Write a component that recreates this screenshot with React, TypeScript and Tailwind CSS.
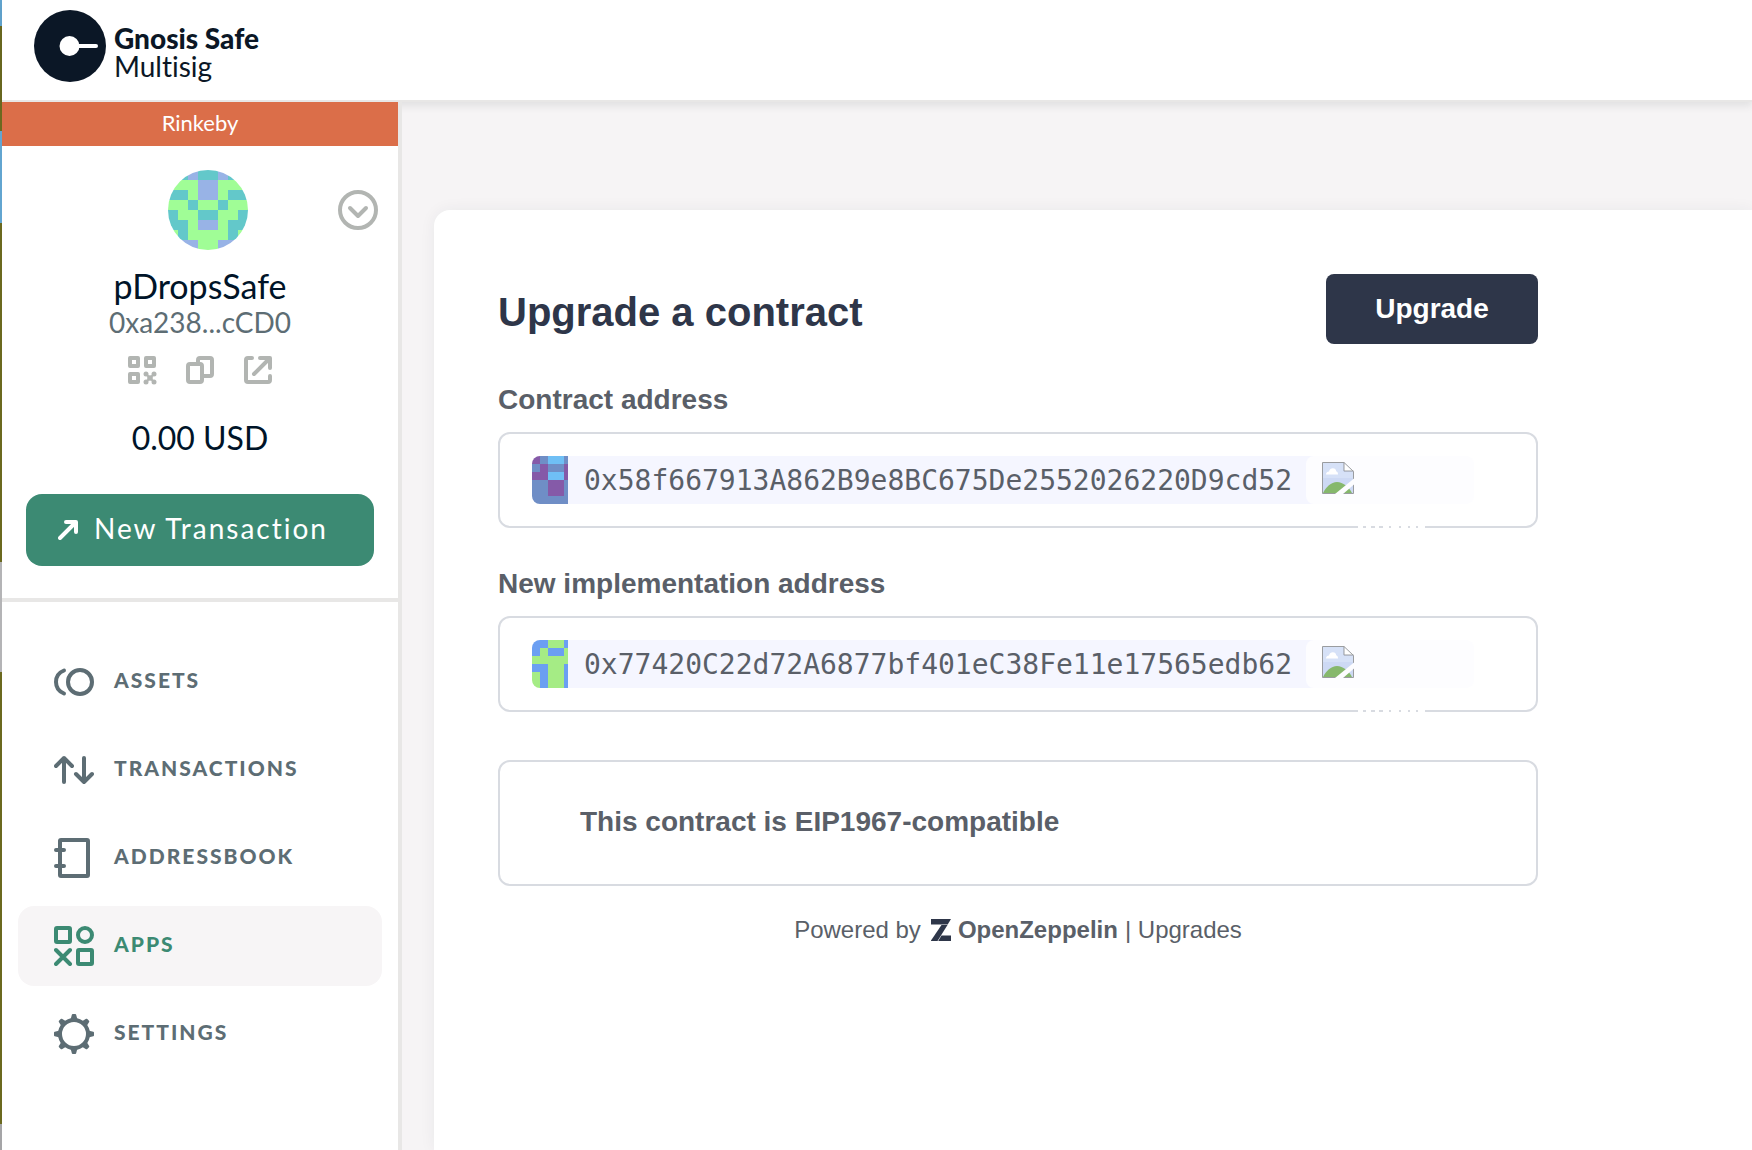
import type { ReactNode } from 'react';

type IconProps = { className?: string };

/* Pixel grid: one letter per cell, each letter looked up in a palette. */
function PixelGrid({ rows, palette, width, height, cell, className }: {
  rows: string[];
  palette: Record<string, string>;
  width: number;
  height: number;
  cell: number;
  className?: string;
}) {
  return (
    <svg width={width} height={height} viewBox={`0 0 ${width} ${height}`} shapeRendering="crispEdges" className={className} aria-hidden="true">
      {rows.flatMap((row, y) =>
        row.split('').map((c, x) => (
          <rect key={`${x}-${y}`} x={x * cell} y={y * cell} width={cell} height={cell} fill={palette[c]} />
        )),
      )}
    </svg>
  );
}

const SafeLogo = () => (
  <svg width="72" height="72" viewBox="0 0 72 72" aria-hidden="true" className="shrink-0">
    <circle cx="36" cy="36" r="36" fill="#0b1726" />
    <circle cx="35.500" cy="36" r="10" fill="#fff" />
    <path d="M36 36H62" stroke="#fff" strokeWidth="4" strokeLinecap="round" />
  </svg>
);

const ChevronCircle = () => (
  <svg width="40" height="40" viewBox="0 0 40 40" fill="none" stroke="#b2b5b2" strokeWidth="4" strokeLinecap="round" strokeLinejoin="round" aria-hidden="true">
    <circle cx="20" cy="20" r="18" />
    <path d="M12 18l8 8 8-8" />
  </svg>
);

const QrIcon = () => (
  <svg width="29" height="29" viewBox="0 0 29 29" fill="none" stroke="#b2b5b2" strokeWidth="4" strokeLinejoin="round" aria-hidden="true">
    <rect x="2" y="2" width="8" height="8" />
    <rect x="18" y="2" width="8" height="8" />
    <rect x="2" y="18" width="8" height="8" />
    <g fill="#b2b5b2" stroke="none">
      <circle cx="18" cy="18" r="2.5" />
      <circle cx="26" cy="18" r="2.5" />
      <circle cx="22" cy="22" r="2.8" />
      <circle cx="18" cy="26" r="2.5" />
      <circle cx="26" cy="26" r="2.5" />
    </g>
    <path d="M18 18l8 8M26 18l-8 8" strokeWidth="2" />
  </svg>
);

const CopyIcon = () => (
  <svg width="28" height="28" viewBox="0 0 28 28" fill="none" stroke="#b2b5b2" strokeWidth="4" strokeLinecap="round" strokeLinejoin="round" aria-hidden="true">
    <rect x="2" y="8" width="14" height="18" rx="2" />
    <path d="M12 7V4a2 2 0 0 1 2-2h10a2 2 0 0 1 2 2v14a2 2 0 0 1-2 2h-6" />
  </svg>
);

const ExternalIcon = () => (
  <svg width="28" height="28" viewBox="0 0 28 28" fill="none" stroke="#b2b5b2" strokeWidth="4" strokeLinecap="round" strokeLinejoin="round" aria-hidden="true">
    <path d="M8 2H4a2 2 0 0 0-2 2v20a2 2 0 0 0 2 2h20a2 2 0 0 0 2-2v-4" />
    <path d="M16 2h10v10M25 3L10 18" />
  </svg>
);

const SendIcon = () => (
  <svg width="20" height="20" viewBox="0 0 20 20" fill="none" stroke="#fff" strokeWidth="4" strokeLinecap="round" strokeLinejoin="round" aria-hidden="true">
    <path d="M8 2h10v10M17 3L2 18" />
  </svg>
);

const strokeProps = {
  width: 40,
  height: 40,
  viewBox: '0 0 40 40',
  fill: 'none',
  stroke: 'currentColor',
  strokeWidth: 4,
  strokeLinecap: 'round',
  strokeLinejoin: 'round',
  'aria-hidden': true,
} as const;

const AssetsIcon = ({ className }: IconProps) => (
  <svg {...strokeProps} className={className}>
    <circle cx="26" cy="20" r="12" />
    <path d="M10 8.500C5 10.500 2 15 2 20s3 9.500 8 11.500" />
  </svg>
);

const TransactionsIcon = ({ className }: IconProps) => (
  <svg {...strokeProps} className={className}>
    <path d="M10 32V8M2 16l8-8 8 8M30 8v24M22 24l8 8 8-8" />
  </svg>
);

const AddressBookIcon = ({ className }: IconProps) => (
  <svg {...strokeProps} className={className}>
    <rect x="6" y="2" width="28" height="36" rx="1" />
    <path d="M2 12h8M2 28h8" />
  </svg>
);

const AppsIcon = ({ className }: IconProps) => (
  <svg {...strokeProps} className={className}>
    <rect x="2" y="2" width="14" height="14" rx="1" />
    <circle cx="31" cy="9" r="7" />
    <path d="M2 24l14 14M16 24L2 38" />
    <rect x="24" y="24" width="14" height="14" rx="1" />
  </svg>
);

const SettingsIcon = ({ className }: IconProps) => (
  <svg {...strokeProps} className={className}>
    <circle cx="20" cy="20" r="14" />
    {[0, 45, 90, 135, 180, 225, 270, 315].map((a) => (
      <path key={a} d="M18.800 1h2.400l1.300 5h-5z" fill="currentColor" strokeWidth="2" transform={`rotate(${a} 20 20)`} />
    ))}
  </svg>
);

const BrokenImageIcon = () => (
  <svg width="32" height="32" viewBox="0 0 32 32" aria-hidden="true">
    <path d="M.5.5H22l9.500 9V31.500H.5z" fill="#cdd9f4" />
    <path d="M1 1h20v9h10v6H1z" fill="#d6e1f7" />
    <path d="M22 .5v8.500h9.500z" fill="#fff" />
    <path d="M4 12.500c0-2 1.500-3 3-3 .6-2.200 2-3.300 3.800-3.300 2 0 3.200 1.200 3.400 3 1.200.3 1.800 1.500 1.800 3.300z" fill="#fff" />
    <path d="M1 31c3-6 8-11 14-11s12 5 15 11z" fill="#86b86c" />
    <path d="M.5.5H22l9.500 9V31.500H.5zM22 .5v8.500h9.500" fill="none" stroke="#9a9c9f" />
    <path d="M32 16.500v6L21 32h-8z" fill="#fdfdff" />
  </svg>
);

const ZeppelinMark = () => (
  <svg width="20" height="22" viewBox="0 0 20 22" fill="#2e3649" aria-hidden="true">
    <path d="M0 0h20l-3.300 5.500H0z" />
    <path d="M10.500 6h6L6.500 22H0v-.5z" />
    <path d="M10.500 16.500H20V22H7.200z" />
  </svg>
);

const navItems: { label: string; icon: (p: IconProps) => ReactNode; active?: boolean }[] = [
  { label: 'ASSETS', icon: AssetsIcon },
  { label: 'TRANSACTIONS', icon: TransactionsIcon },
  { label: 'ADDRESSBOOK', icon: AddressBookIcon },
  { label: 'APPS', icon: AppsIcon, active: true },
  { label: 'SETTINGS', icon: SettingsIcon },
];

function AddressField({ id, label, value, rows, palette }: {
  id: string;
  label: string;
  value: string;
  rows: string[];
  palette: Record<string, string>;
}) {
  return (
    <div className="mt-9">
      <label htmlFor={id} className="mb-3 block text-[28px] leading-10 font-bold">{label}</label>
      <div className="relative flex h-24 items-center rounded-xl border-2 border-[#d8dbe1] pr-[62px] pl-8">
        <PixelGrid rows={rows} palette={palette} width={36} height={48} cell={8} className="shrink-0 rounded-l-lg" />
        <input
          id={id}
          defaultValue={value}
          className="h-12 min-w-0 flex-1 bg-[#f5f6ff] pl-4 font-['DejaVu_Sans_Mono',monospace] text-[28px] outline-none"
        />
        <button type="button" aria-label="Address options" className="-ml-2 flex h-12 w-[168px] shrink-0 items-start rounded-lg bg-[#fdfdff] px-4 pt-1.5">
          <BrokenImageIcon />
        </button>
        <svg width="70" height="2" viewBox="0 0 70 2" fill="#fff" aria-hidden="true" className="absolute right-[108px] -bottom-0.5">
          <path d="M0 0h5v2H0zM8 0h5v2H8zM17 0h4v2h-4zM25 0h6v2h-6zM33 0h8v2h-8zM43 0h7v2h-7zM52 0h6v2h-6zM60 0h7v2h-7z" />
        </svg>
      </div>
    </div>
  );
}

export default function App() {
  return (
    <div className="flex min-h-screen bg-white font-['Lato',sans-serif] text-[#001428] [font-variant-ligatures:none]">
      <div className="w-0.5 shrink-0 bg-[linear-gradient(to_bottom,#62a5d0_0_26px,#6b691f_26px_131px,#62a5d0_131px_223px,#6b691f_223px_562px,#b4b4b6_562px_672px,#6b691f_672px_1124px,#a5a5a7_1124px)]" />
      <div className="flex min-w-0 flex-1 flex-col">
        <header className="relative z-10 flex h-[102px] items-start gap-2 border-b-2 border-[#e8e7e6] bg-white pt-2.5 pl-8 shadow-[0_4px_8px_rgba(40,54,61,0.10)]">
          <SafeLogo />
          <div className="pt-3.5 text-[#0b1726]">
            <div className="text-[28px] leading-7 font-black">Gnosis Safe</div>
            <div className="text-[28px] leading-7">Multisig</div>
          </div>
        </header>

        <div className="flex flex-1">
          <aside className="relative z-20 w-[400px] shrink-0 border-r-4 border-[#e8e7e6] bg-white">
            <div className="flex h-11 items-center justify-center bg-[#db6e49] pb-1 text-[22px] text-white">Rinkeby</div>

            <section className="flex flex-col items-center border-b-4 border-[#e8e7e6] pt-6 pb-8">
              <div className="flex w-full items-center justify-end gap-[90px] pr-5">
                <PixelGrid
                  rows={['ttpttptt', 'gggppggg', 'ttgppgtt', 'ggtggtgg', 'tggttggt', 'ttgppgtt', 'gtggggtg', 'tppggppt']}
                  palette={{ t: '#63c8ca', g: '#a0fd96', p: '#98b3e6' }}
                  width={80}
                  height={80}
                  cell={10}
                  className="rounded-full"
                />
                <button type="button" aria-label="Show safes"><ChevronCircle /></button>
              </div>
              <div className="mt-4 text-[34px] leading-10">pDropsSafe</div>
              <div className="text-[28px] leading-8 text-[#5d6d74]">0xa238...cCD0</div>
              <div className="mt-[18px] flex h-7 gap-[30px]">
                <button type="button" aria-label="Show QR code" className="w-7"><QrIcon /></button>
                <button type="button" aria-label="Copy address" className="w-7"><CopyIcon /></button>
                <a href="#explorer" aria-label="View on explorer" className="w-7"><ExternalIcon /></a>
              </div>
              <div className="mt-[34px] text-[32px] leading-10">0.00 USD</div>
              <div className="mt-9 w-full px-6">
                <button type="button" className="flex h-[72px] w-full items-center gap-4 rounded-2xl bg-[#3c8a73] pl-8 text-[28px] tracking-[2px] text-white">
                  <SendIcon />
                  <span className="pb-1">New Transaction</span>
                </button>
              </div>
            </section>

            <nav className="flex flex-col gap-2 px-4 pt-10">
              {navItems.map(({ label, icon: Icon, active }) => (
                <a
                  key={label}
                  href={`#${label.toLowerCase()}`}
                  className={active
                    ? 'flex h-20 items-center gap-5 rounded-2xl bg-[#f7f5f6] pl-9 text-[#3c8a73]'
                    : 'flex h-20 items-center gap-5 rounded-2xl pl-9 text-[#5d6d74]'}
                >
                  <Icon />
                  <span className="pb-1 text-[21px] font-black tracking-[2px]">{label}</span>
                </a>
              ))}
            </nav>
          </aside>

          <main className="flex min-w-0 flex-1 overflow-hidden bg-[#f6f4f5] pt-[108px] pl-8">
            <div className="min-w-0 flex-1 rounded-tl-2xl bg-white px-16 pt-16 font-['Liberation_Sans',sans-serif] text-[#5a5f68] shadow-[0_0_16px_rgba(40,54,61,0.06)]">
              <div className="max-w-[1040px]">
                <div className="flex items-center justify-between">
                  <h1 className="pt-1.5 text-[40px] font-bold text-[#2e3649]">Upgrade a contract</h1>
                  <button type="button" className="h-[70px] w-[212px] rounded-lg bg-[#2e3649] text-[28px] font-bold text-white">Upgrade</button>
                </div>
                <AddressField
                  id="contract-address"
                  label="Contract address"
                  value="0x58f667913A862B9e8BC675De2552026220D9cd52"
                  rows={['mbllb', 'bmbbm', 'mmllm', 'bbmmb', 'bbmmb', 'bbbbb']}
                  palette={{ b: '#6f8ec6', m: '#855aa8', l: '#6fbff5' }}
                />
                <AddressField
                  id="implementation-address"
                  label="New implementation address"
                  value="0x77420C22d72A6877bf401eC38Fe11e17565edb62"
                  rows={['bbggb', 'bgbbg', 'ggggg', 'bbggb', 'gbggb', 'gbggb']}
                  palette={{ b: '#6b9ff2', g: '#a5ec85' }}
                />
                <div className="mt-12 rounded-xl border-2 border-[#d8dbe1] pt-10 pb-[42px] pl-20 text-[28px] leading-10 font-bold">
                  This contract is EIP1967-compatible
                </div>
                <footer className="mt-7 flex items-center justify-center text-2xl">
                  <span className="mr-2.5">Powered by</span>
                  <ZeppelinMark />
                  <b className="mx-[7px]">OpenZeppelin</b>
                  <span>| Upgrades</span>
                </footer>
              </div>
            </div>
          </main>
        </div>
      </div>
    </div>
  );
}
